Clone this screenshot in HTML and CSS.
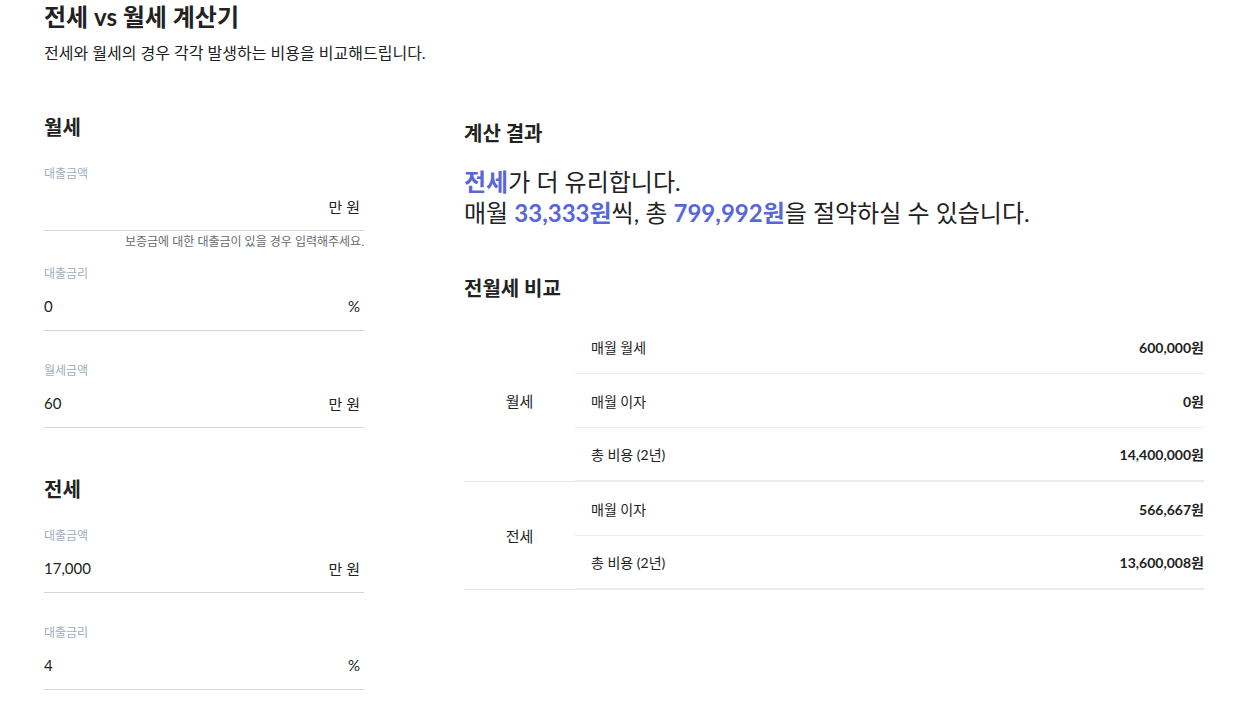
FILE: index.html
```html
<!DOCTYPE html>
<html lang="ko">
<head>
<meta charset="utf-8">
<title>전세 vs 월세 계산기</title>
<link rel="stylesheet" href="styles.css">
</head>
<body>
<div class="page">
  <header class="header">
    <h1 class="title">전세 vs 월세 계산기</h1>
    <p class="subtitle">전세와 월세의 경우 각각 발생하는 비용을 비교해드립니다.</p>
  </header>
  <main class="layout">
    <section class="inputs">
      <div class="group">
        <h2 class="group-title">월세</h2>
        <div class="field has-help">
          <label class="label">대출금액</label>
          <div class="input-row"><span class="value"></span><span class="unit">만 원</span></div>
          <p class="help">보증금에 대한 대출금이 있을 경우 입력해주세요.</p>
        </div>
        <div class="field">
          <label class="label">대출금리</label>
          <div class="input-row"><span class="value">0</span><span class="unit">%</span></div>
        </div>
        <div class="field">
          <label class="label">월세금액</label>
          <div class="input-row"><span class="value">60</span><span class="unit">만 원</span></div>
        </div>
      </div>
      <div class="group">
        <h2 class="group-title">전세</h2>
        <div class="field">
          <label class="label">대출금액</label>
          <div class="input-row"><span class="value">17,000</span><span class="unit">만 원</span></div>
        </div>
        <div class="field">
          <label class="label">대출금리</label>
          <div class="input-row"><span class="value">4</span><span class="unit">%</span></div>
        </div>
      </div>
    </section>
    <section class="results">
      <h2 class="result-title">계산 결과</h2>
      <p class="summary"><strong class="hl">전세</strong>가 더 유리합니다.<br>매월 <strong class="hl">33,333원</strong>씩, 총 <strong class="hl">799,992원</strong>을 절약하실 수 있습니다.</p>
      <h2 class="result-title compare-title">전월세 비교</h2>
      <table class="compare">
        <tbody>
          <tr>
            <th class="kind" rowspan="3">월세</th>
            <td class="name">매월 월세</td>
            <td class="amount">600,000원</td>
          </tr>
          <tr>
            <td class="name">매월 이자</td>
            <td class="amount">0원</td>
          </tr>
          <tr class="last">
            <td class="name">총 비용 (2년)</td>
            <td class="amount">14,400,000원</td>
          </tr>
        </tbody>
        <tbody>
          <tr>
            <th class="kind" rowspan="2">전세</th>
            <td class="name">매월 이자</td>
            <td class="amount">566,667원</td>
          </tr>
          <tr class="last">
            <td class="name">총 비용 (2년)</td>
            <td class="amount">13,600,008원</td>
          </tr>
        </tbody>
      </table>
    </section>
  </main>
</div>
</body>
</html>
```

FILE: styles.css
```css
* { box-sizing: border-box; }

body {
  margin: 0;
  background: #ffffff;
  color: #222222;
  font-family: Lato, "Noto Sans CJK KR", sans-serif;
}

.page {
  padding: 0 44px;
}

.title {
  margin: 0;
  font-size: 24px;
  line-height: 34px;
  font-weight: 700;
  color: #222;
}

.subtitle {
  margin: 9px 0 0;
  font-size: 16px;
  line-height: 20px;
  color: #222;
}

.layout {
  display: flex;
  gap: 100px;
  margin-top: 50px;
}

.inputs {
  width: 320px;
  flex: none;
}

.group + .group {
  margin-top: 47px;
}

.group-title {
  margin: 0 0 25px;
  font-size: 20px;
  line-height: 28px;
  font-weight: 700;
}

.field {
  margin-bottom: 32px;
}

.field.has-help {
  margin-bottom: 16px;
}

.label {
  display: block;
  font-size: 12px;
  line-height: 16px;
  color: #a0aec0;
}

.input-row {
  display: flex;
  justify-content: space-between;
  align-items: center;
  height: 49px;
  border-bottom: 1px solid #d4d4d4;
  font-size: 15px;
  color: #222;
}

.unit {
  padding-right: 4px;
}

.help {
  margin: 3px 0 0;
  font-size: 12px;
  line-height: 16px;
  text-align: right;
  color: #666b75;
}

.results {
  width: 740px;
  flex: none;
  padding-top: 6px;
}

.result-title {
  margin: 0;
  font-size: 20px;
  line-height: 28px;
  font-weight: 700;
}

.summary {
  margin: 19px 0 0;
  font-size: 24px;
  line-height: 31px;
  color: #222;
}

.hl {
  color: #5a67d8;
  font-weight: 700;
}

.compare-title {
  margin-top: 46px;
}

.compare {
  width: 100%;
  margin-top: 18px;
  border-collapse: separate;
  border-spacing: 0;
  font-size: 14px;
  color: #222;
}

.compare td,
.compare th {
  height: 54px;
  padding: 0;
  vertical-align: middle;
}

.kind {
  width: 111px;
  font-weight: 400;
  font-size: 15px;
  text-align: center;
  border-bottom: 1px solid #e6e6e6;
}

.name {
  padding-left: 16px !important;
  text-align: left;
  border-bottom: 1px solid #ececec;
}

.amount {
  text-align: right;
  font-weight: 700;
  border-bottom: 1px solid #ececec;
}

.last .name,
.last .amount {
  border-bottom: 2px solid #ececec;
}
```
